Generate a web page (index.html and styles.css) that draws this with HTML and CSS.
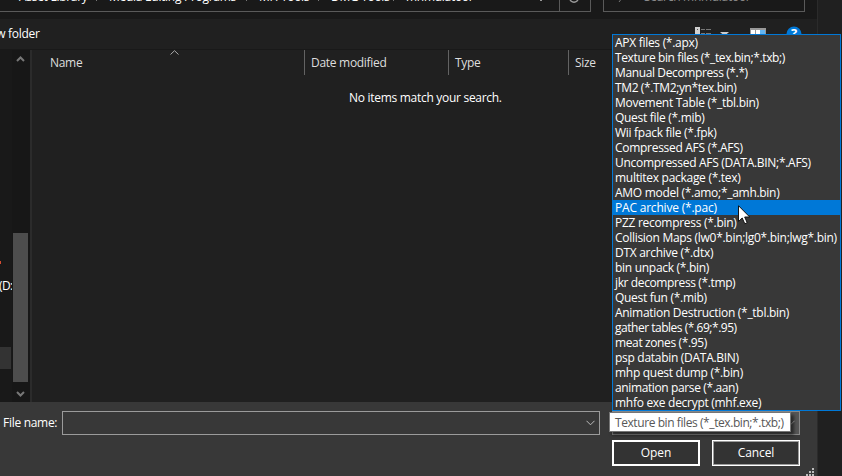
FILE: index.html
```html
<!DOCTYPE html>
<html lang="en">
<head>
<meta charset="utf-8">
<title>Open</title>
<link rel="stylesheet" href="styles.css">
</head>
<body>
<main class="dialog">
  <header class="nav">
    <div class="address">
      <span class="crumb c1">Asset Library</span><i class="sep"></i>
      <span class="crumb c2">Media Editing Programs</span><i class="sep"></i>
      <span class="crumb c3">MH Tools</span><i class="sep"></i>
      <span class="crumb c4">DMG Tools</span><i class="sep"></i>
      <span class="crumb c5">mhmulatool</span>
      <i class="drop"></i>
    </div>
    <div class="refresh"><svg width="12" height="12" viewBox="0 0 12 12"><circle cx="6" cy="6" r="4.2"/></svg></div>
    <div class="search"><svg width="6" height="6" viewBox="0 0 6 6"><path d="M1 5 4 1"/></svg><span>Search mhmulatool</span></div>
  </header>
  <div class="toolbar">
    <span class="newfolder">New folder</span>
    <svg class="tools" width="112" height="16" viewBox="0 0 112 16">
      <path fill="#d0d0d0" d="M0 1h5v5H0zM0 6h5v5H0z"/>
      <path fill="#555" d="M2 3h1v1H2zM2 8h1v1H2z"/>
      <path stroke="#777" d="M6 3.500h4M11 3.500h5M6 7.500h4M11 7.500h5"/>
      <path fill="#ccc" d="M25 6h9l-4.500 4z"/>
      <path fill="#999" d="M55 2h16v10H55z"/>
      <path fill="#fff" d="M56 4h4v7h-4zM61 4h4v7h-4z"/>
      <path fill="#63b5f2" d="M65 4h5v7h-5z"/>
      <circle cx="99" cy="8" r="7.500" fill="#0078d7"/>
      <text x="99" y="12" text-anchor="middle" fill="#fff">?</text>
    </svg>
  </div>
  <section class="content">
    <aside class="tree">
      <div class="nodes"><i class="red"></i><span class="drive">(D:</span><i class="selected"></i></div>
      <div class="scroll">
        <svg width="9" height="8" viewBox="0 0 9 8"><path d="M1 6 4.500 2.500 8 6"/></svg>
        <i class="thumb"></i>
        <svg width="9" height="8" viewBox="0 0 9 8"><path d="M1 2 4.500 5.500 8 2"/></svg>
      </div>
    </aside>
    <div class="files">
      <div class="columns">
        <span class="name">Name<svg class="sort" width="9" height="5" viewBox="0 0 9 5"><path d="M.5 4.500 4.500.7 8.500 4.500"/></svg></span>
        <span class="date">Date modified</span><span class="type">Type</span><span class="size">Size</span>
      </div>
      <p class="empty">No items match your search.</p>
    </div>
  </section>
  <footer class="footer">
    <div class="row">
      <label>File name:</label>
      <div class="field"><svg width="9" height="6" viewBox="0 0 9 6"><path d="M.5.8 4.500 4.800 8.500.8"/></svg></div>
      <div class="filter"><svg width="9" height="6" viewBox="0 0 9 6"><path d="M.5.8 4.500 4.800 8.500.8"/></svg></div>
    </div>
    <div class="buttons"><button class="open">Open</button><button class="cancel">Cancel</button></div>
    <svg class="grip" width="8" height="8" viewBox="0 0 8 8"><path d="M6 0h2v2H6zM3 3h2v2H3zM6 3h2v2H6zM0 6h2v2H0zM3 6h2v2H3zM6 6h2v2H6z"/></svg>
  </footer>
</main>
<ul class="menu">
  <li>APX files (*.apx)</li>
  <li class="tight">Texture bin files (*_tex.bin;*.txb;)</li>
  <li class="tight">Manual Decompress (*.*)</li>
  <li class="tight">TM2 (*.TM2;yn*tex.bin)</li>
  <li>Movement Table (*_tbl.bin)</li>
  <li>Quest file (*.mib)</li>
  <li>Wii fpack file (*.fpk)</li>
  <li>Compressed AFS (*.AFS)</li>
  <li>Uncompressed AFS (DATA.BIN;*.AFS)</li>
  <li>multitex package (*.tex)</li>
  <li>AMO model (*.amo;*_amh.bin)</li>
  <li class="active">PAC archive (*.pac)</li>
  <li>PZZ recompress (*.bin)</li>
  <li>Collision Maps (lw0*.bin;lg0*.bin;lwg*.bin)</li>
  <li>DTX archive (*.dtx)</li>
  <li>bin unpack (*.bin)</li>
  <li class="tight">jkr decompress (*.tmp)</li>
  <li>Quest fun (*.mib)</li>
  <li>Animation Destruction (*_tbl.bin)</li>
  <li class="tight gather">gather tables (*.69;*.95)</li>
  <li class="tight">meat zones (*.95)</li>
  <li>psp databin (DATA.BIN)</li>
  <li>mhp quest dump (*.bin)</li>
  <li class="tight">animation parse (*.aan)</li>
  <li>mhfo exe decrypt (mhf.exe)</li>
</ul>
<div class="tooltip">Texture bin files (*_tex.bin;*.txb;)</div>
<svg class="cursor" width="13" height="20" viewBox="0 0 13 20"><path d="M.5.7V16.500L4.200 13 6.800 18.800 9.200 17.700 6.700 12H11.700Z"/></svg>
</body>
</html>
```
FILE: styles.css
```css
* { box-sizing: border-box; }
body {
  margin: 0; width: 842px; height: 476px; overflow: hidden; position: relative;
  background: #202020; color: #fff;
  font: 12px/15px "Open Sans", "Noto Sans", sans-serif; letter-spacing: -.29px;
}
svg { display: block; fill: none; }
.dialog { width: 818px; height: 476px; display: flex; flex-direction: column; background: #191919; border-right: 1px solid #2b2b2b; }
.nav { height: 19px; display: flex; padding-bottom: 7px; overflow: hidden; }
.address { width: 559px; border-bottom: 1px solid #5a5a5a; display: flex; padding-left: 19px; }
.crumb { margin-top: -11px; white-space: nowrap; flex: none; }
.c1 { width: 77px; } .c2 { width: 137px; } .c3 { width: 59px; } .c4 { width: 62px; } .c5 { width: 134px; }
.sep { width: 1px; height: 1px; background: #777; flex: none; margin-right: 12px; }
.drop { width: 2px; height: 1px; background: #999; }
.refresh { width: 32px; border: 1px solid #5a5a5a; border-width: 0 1px 1px; padding-left: 8px; }
.refresh svg { margin-top: -8px; stroke: #999; stroke-width: 1.5; }
.search { width: 202px; margin-left: 12px; border: 1px solid #5a5a5a; border-width: 0 1px 1px; display: flex; padding-left: 14px; color: #8b8b8b; }
.search svg { margin-top: -3px; stroke: #777; }
.search span { margin: -11px 0 0 20px; white-space: nowrap; }
.toolbar { height: 31px; background: #202020; border-bottom: 1px solid #191919; display: flex; }
.newfolder { width: 80px; margin: 7px 0 0 -19px; }
.tools { margin: 7px 0 0 634px; flex: none; font-size: 13px; font-weight: 700; }
.content { height: 352px; display: flex; }
.tree { width: 32px; display: flex; border-right: 2px solid #2b2b2b; }
.nodes { width: 12px; padding-top: 211px; }
.nodes i { display: block; }
.red { width: 1px; height: 3px; background: #d64b30; }
.drive { display: block; margin: 14px 0 0 -1px; width: 14px; height: 15px; white-space: nowrap; letter-spacing: -.6px; }
.selected { width: 11px; height: 22px; background: #333; margin-top: 54px; }
.scroll { width: 18px; padding: 5px 0 3px 1px; background: #171717; display: flex; flex-direction: column; }
.scroll svg { margin-left: 3px; stroke: #777; stroke-width: 2; flex: none; }
.thumb { width: 15px; height: 149px; background: #4d4d4d; margin: 170px 0 8px; flex: none; }
.files { flex: 1; background: #202020; }
.columns { height: 25px; display: flex; color: #dedede; line-height: 25px; }
.columns span { border-right: 1px solid #636363; padding-left: 6px; }
.columns .name { width: 273px; padding-left: 18px; display: flex; }
.sort { stroke: #aaa; margin-left: 88px; }
.columns .date { width: 144px; }
.columns .type { width: 120px; }
.columns .size { border: 0; }
.empty { margin: 15px 0 0 317px; }
.footer { flex: 1; background: #383838; position: relative; }
.row { display: flex; padding-top: 9px; height: 38px; }
label { width: 62px; padding: 4px 0 0 3px; }
.field, .filter { height: 24px; border: 1px solid #9b9b9b; display: flex; align-items: center; justify-content: flex-end; padding-right: 4px; }
.field { width: 538px; }
.filter { width: 188px; margin-left: 12px; background: #555; border-color: #888; }
.row svg { stroke: #bbb; }
.buttons { display: flex; gap: 12px; padding: 0 0 0 612px; }
button { height: 26px; width: 88px; background: #333; color: #fff; font: inherit; letter-spacing: -.1px; padding: 0 0 1px; border: 2px solid #fff; }
.cancel { border: 1px solid #fff; box-shadow: inset 0 0 0 1px #9b9b9b; }
.grip { position: absolute; right: 3px; bottom: 0; fill: #bbb; }
.menu { position: absolute; left: 612px; top: 34px; width: 229px; height: 377px; margin: 0; padding: 0; list-style: none; background: #383838; border: 1px solid #0078d7; white-space: nowrap; }
.menu li { height: 15px; padding-left: 2px; }
.menu .tight { letter-spacing: -.38px; }
.menu .gather { letter-spacing: -.48px; }
.menu .active { background: #0078d7; letter-spacing: -.2px; }
.tooltip { position: absolute; left: 609px; top: 412px; width: 182px; height: 20px; padding: 2px 0 0 5px; border: 1px solid #767676; background: #fff; color: #575757; box-shadow: 3px 3px 3px #0008; white-space: nowrap; letter-spacing: -.42px; }
.cursor { position: absolute; left: 738px; top: 205px; fill: #fff; stroke: #111; }
```
